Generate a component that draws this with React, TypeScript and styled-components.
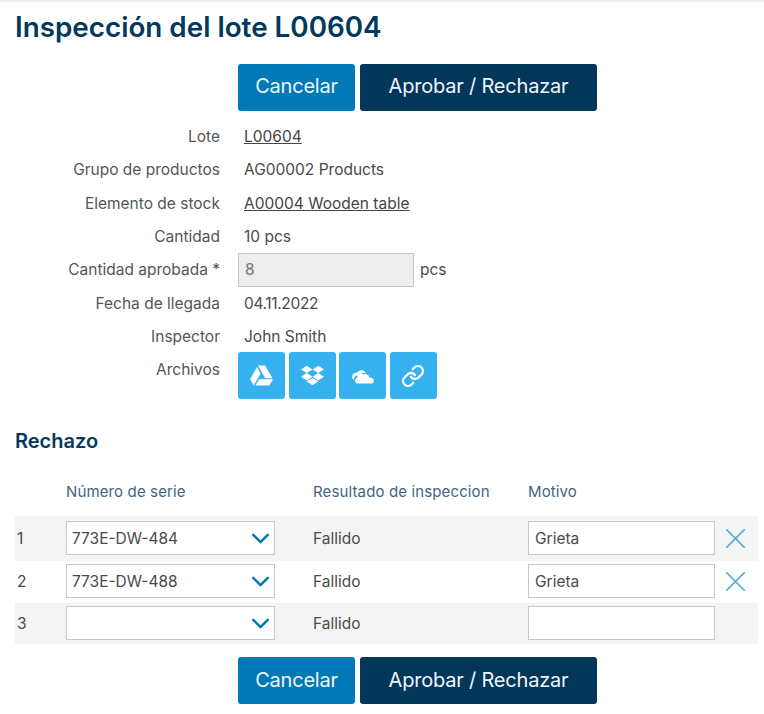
import React from 'react';
import styled, { createGlobalStyle } from 'styled-components';
import { FaGoogleDrive, FaDropbox } from 'react-icons/fa';
import { ChevronDown, Link, X } from 'lucide-react';

const GlobalStyle = createGlobalStyle`
  html, body {
    margin: 0;
    padding: 0;
    background: #fff;
    font-family: Inter, "Liberation Sans", sans-serif;
    color: #4a4a4a;
  }
  * { box-sizing: border-box; }
`;

const Page = styled.div`
  width: 764px;
  height: 714px;
  overflow: hidden;
  border-top: 2px solid #e9eef2;
  padding: 0 6px 0 15px;
`;

const Title = styled.h1`
  margin: 0;
  height: 61.5px;
  padding-top: 8px;
  font-size: 27.8px;
  line-height: 35px;
  font-weight: 600;
  color: #03395c;
`;

const Actions = styled.div`
  display: flex;
  gap: 5px;
  padding-left: 223px;
  height: 47px;
`;

const ActionButton = styled.button<{ $dark?: boolean }>`
  width: ${(p) => (p.$dark ? '237px' : '117px')};
  height: 47px;
  border: 0;
  border-radius: 3px;
  padding: 0 0 2px;
  font-family: inherit;
  font-size: 20px;
  letter-spacing: -0.2px;
  color: #eef5fa;
  background: ${(p) => (p.$dark ? '#03375a' : '#0079b6')};
`;

const Form = styled.div`
  margin-top: 9.5px;
`;

const FormRow = styled.div`
  display: grid;
  grid-template-columns: 205px 1fr;
  grid-template-rows: 33.3px;
  align-items: center;
  font-size: 15.5px;
`;

const Label = styled.div`
  text-align: right;
  color: #555;
`;

const Value = styled.div`
  padding-left: 24px;
  display: flex;
  align-items: center;
`;

const DateValue = styled(Value)`
  letter-spacing: -0.35px;
`;

const ValueLink = styled.a`
  color: #444;
  text-decoration: underline;
`;

const DisabledInput = styled.div`
  width: 176px;
  height: 34px;
  margin-left: -6px;
  padding: 0 6px;
  display: flex;
  align-items: center;
  background: #eee;
  border: 1px solid #c4c4c4;
  color: #777;
`;

const Unit = styled.span`
  margin-left: 6px;
`;

const FileRow = styled(FormRow)`
  align-items: start;
  grid-template-rows: 47px;
`;

const FileLabel = styled(Label)`
  line-height: 33px;
`;

const FileButtons = styled.div`
  display: flex;
  gap: 3.67px;
  margin: -1px 0 0 18px;
`;

const FileButton = styled.button`
  width: 47px;
  height: 47px;
  border: 0;
  border-radius: 3px;
  padding: 0;
  display: flex;
  align-items: center;
  justify-content: center;
  color: #fff;
  background: #36b1f0;
`;

const SectionTitle = styled.h2`
  margin: 27px 0 0;
  font-size: 20px;
  line-height: 28px;
  font-weight: 600;
  color: #03395c;
`;

const TableHeader = styled.div`
  display: grid;
  grid-template-columns: 51px 247px 215px 1fr;
  margin-top: 26px;
  height: 35px;
  font-size: 15px;
  line-height: 22px;
  letter-spacing: 0.13px;
  color: #3f6583;
`;

const TableRow = styled.div<{ $shaded?: boolean; $top: number; $bottom: number }>`
  display: grid;
  grid-template-columns: 51px 247px 215px 187px 1fr;
  align-items: center;
  padding: ${(p) => p.$top}px 0 ${(p) => p.$bottom}px;
  background: ${(p) => (p.$shaded ? '#f4f4f4' : '#fff')};
  font-size: 15.5px;
`;

const RowNumber = styled.div`
  padding-left: 2px;
`;

const Field = styled.div`
  height: 34px;
  padding: 0 6px;
  display: flex;
  align-items: center;
  justify-content: space-between;
  background: #fff;
  border: 1px solid #c8c8c8;
`;

const SelectField = styled(Field)`
  width: 209px;
  padding-left: 5px;
`;

const Chevron = styled(ChevronDown)`
  margin: -2px -7px -2px 0;
  color: #0079b6;
`;

const RemoveCell = styled.div`
  display: flex;
  padding-left: 3px;
  color: #4aa8d8;
`;

const RemoveIcon = styled(X)`
  margin: -1px 0;
`;

const BottomActions = styled(Actions)`
  margin-top: 13px;
`;

const rows = [
  { n: 1, serial: '773E-DW-484', reason: 'Grieta', shaded: true, top: 5, bottom: 5.5, remove: true },
  { n: 2, serial: '773E-DW-488', reason: 'Grieta', shaded: false, top: 3.5, bottom: 5, remove: true },
  { n: 3, serial: '', reason: '', shaded: true, top: 3, bottom: 4, remove: false },
];

const Buttons = () => (
  <>
    <ActionButton>Cancelar</ActionButton>
    <ActionButton $dark>Aprobar / Rechazar</ActionButton>
  </>
);

// two overlapping clouds, the package has no OneDrive glyph
const OneDriveIcon = () => (
  <svg width="26" height="26" viewBox="0 0 24 24" fill="currentColor">
    <path d="M9.6 10.2a5 5 0 0 1 3-1 5 5 0 0 1 2.2.5A4.6 4.6 0 0 0 6.4 9 3.7 3.7 0 0 0 2 12.6a3.6 3.6 0 0 0 1.7 3.1 3.6 3.6 0 0 1 2.8-3.9 4 4 0 0 1 3.1-1.6z" />
    <path d="M7.2 19a2.7 2.7 0 0 1-.5-5.3 3.6 3.6 0 0 1 5.9-3.2 3.7 3.7 0 0 1 2.6-.2 4 4 0 0 1 2.8 3.3 3.1 3.1 0 0 1 4 2.9A2.5 2.5 0 0 1 19.5 19z" />
  </svg>
);

const App = () => (
  <Page>
    <GlobalStyle />
    <Title>Inspección del lote L00604</Title>
    <Actions>
      <Buttons />
    </Actions>
    <Form>
      <FormRow>
        <Label>Lote</Label>
        <Value><ValueLink>L00604</ValueLink></Value>
      </FormRow>
      <FormRow>
        <Label>Grupo de productos</Label>
        <Value>AG00002 Products</Value>
      </FormRow>
      <FormRow>
        <Label>Elemento de stock</Label>
        <Value><ValueLink>A00004 Wooden table</ValueLink></Value>
      </FormRow>
      <FormRow>
        <Label>Cantidad</Label>
        <Value>10 pcs</Value>
      </FormRow>
      <FormRow>
        <Label>Cantidad aprobada *</Label>
        <Value>
          <DisabledInput>8</DisabledInput>
          <Unit>pcs</Unit>
        </Value>
      </FormRow>
      <FormRow>
        <Label>Fecha de llegada</Label>
        <DateValue>04.11.2022</DateValue>
      </FormRow>
      <FormRow>
        <Label>Inspector</Label>
        <Value>John Smith</Value>
      </FormRow>
      <FileRow>
        <FileLabel>Archivos</FileLabel>
        <FileButtons>
          <FileButton><FaGoogleDrive size={23} /></FileButton>
          <FileButton><FaDropbox size={23} /></FileButton>
          <FileButton><OneDriveIcon /></FileButton>
          <FileButton><Link size={24} strokeWidth={2.3} /></FileButton>
        </FileButtons>
      </FileRow>
    </Form>
    <SectionTitle>Rechazo</SectionTitle>
    <TableHeader>
      <div />
      <div>Número de serie</div>
      <div>Resultado de inspeccion</div>
      <div>Motivo</div>
    </TableHeader>
    {rows.map((row) => (
      <TableRow key={row.n} $shaded={row.shaded} $top={row.top} $bottom={row.bottom}>
        <RowNumber>{row.n}</RowNumber>
        <SelectField>
          <span>{row.serial}</span>
          <Chevron size={29} strokeWidth={2} />
        </SelectField>
        <div>Fallido</div>
        <Field>{row.reason}</Field>
        <RemoveCell>{row.remove && <RemoveIcon size={35} strokeWidth={1.1} />}</RemoveCell>
      </TableRow>
    ))}
    <BottomActions>
      <Buttons />
    </BottomActions>
  </Page>
);

export default App;
